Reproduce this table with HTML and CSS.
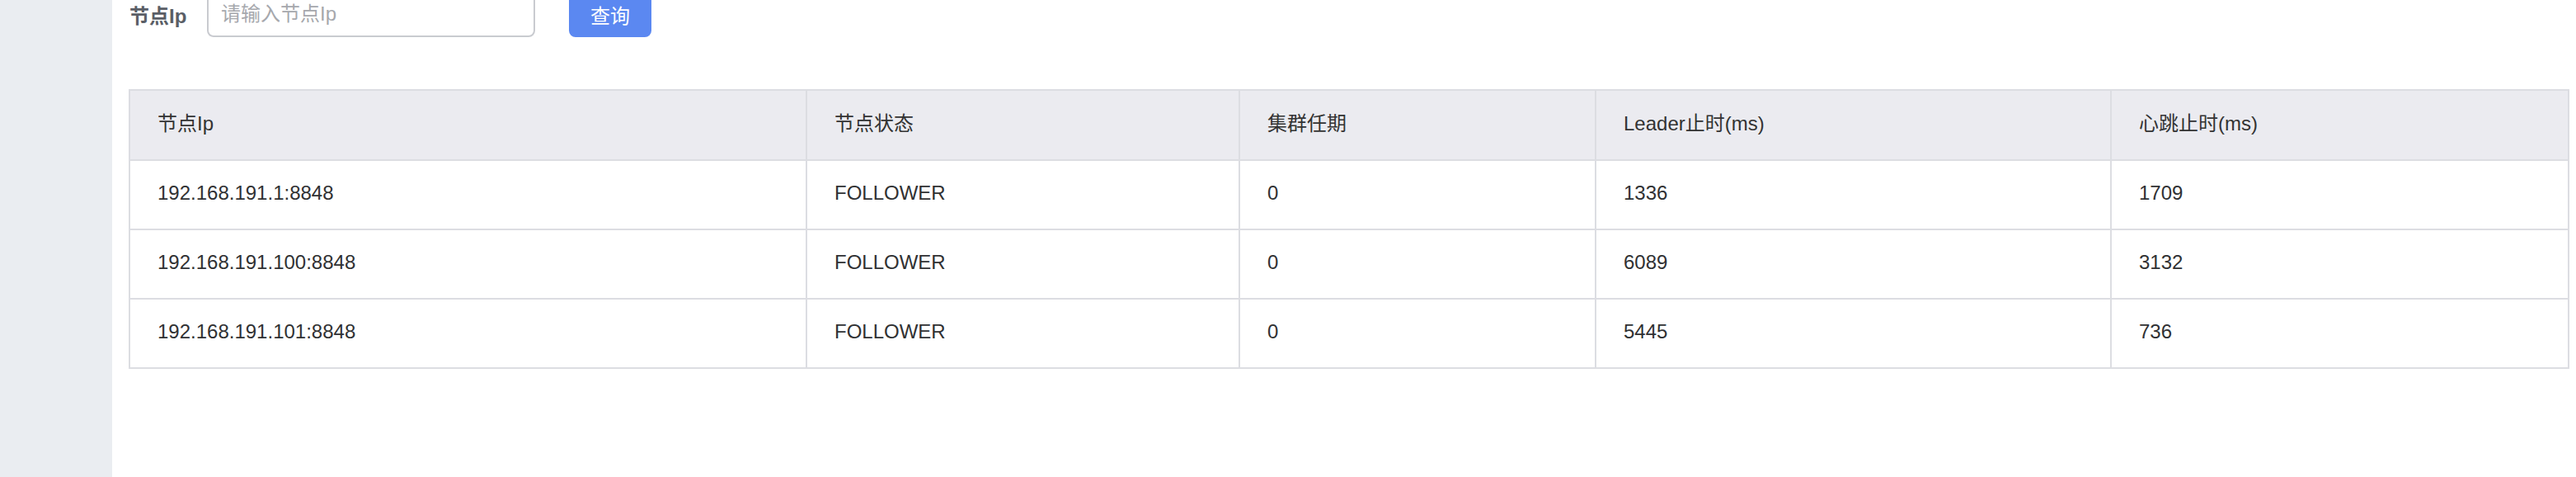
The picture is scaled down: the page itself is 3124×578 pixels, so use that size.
FILE: index.html
```html
<!DOCTYPE html>
<html lang="zh-CN">
<head>
<meta charset="utf-8">
<title>集群管理</title>
<link rel="stylesheet" href="styles.css">
</head>
<body>
<div class="layout">
  <aside class="sidebar"></aside>
  <main class="content">
    <form class="search">
      <label class="search-label" for="ip">节点Ip</label>
      <input id="ip" class="search-input" type="text" placeholder="请输入节点Ip">
      <button type="button" class="search-btn">查询</button>
    </form>
    <table class="grid">
      <colgroup>
        <col class="col-ip">
        <col class="col-state">
        <col class="col-term">
        <col class="col-leader">
        <col class="col-heart">
      </colgroup>
      <thead>
        <tr>
          <th>节点Ip</th>
          <th>节点状态</th>
          <th>集群任期</th>
          <th>Leader止时(ms)</th>
          <th>心跳止时(ms)</th>
        </tr>
      </thead>
      <tbody>
        <tr>
          <td>192.168.191.1:8848</td>
          <td>FOLLOWER</td>
          <td>0</td>
          <td>1336</td>
          <td>1709</td>
        </tr>
        <tr>
          <td>192.168.191.100:8848</td>
          <td>FOLLOWER</td>
          <td>0</td>
          <td>6089</td>
          <td>3132</td>
        </tr>
        <tr>
          <td>192.168.191.101:8848</td>
          <td>FOLLOWER</td>
          <td>0</td>
          <td>5445</td>
          <td>736</td>
        </tr>
      </tbody>
    </table>
  </main>
</div>
</body>
</html>
```

FILE: styles.css
```css
html, body {
  margin: 0;
  padding: 0;
  background: #ffffff;
  font-family: "Liberation Sans", "Noto Sans CJK SC", sans-serif;
  color: #303133;
}

.layout {
  display: flex;
  height: 100vh;
  overflow: hidden;
}

.sidebar {
  flex: 0 0 136px;
  background: #eaedf1;
}

.content {
  flex: 1;
  min-width: 0;
  padding: 0 10px 0 20px;
  margin-top: -11px;
}

.search {
  display: flex;
  align-items: center;
  height: 56px;
  margin: 0;
}

.search-label {
  flex: 0 0 95px;
  box-sizing: border-box;
  padding-left: 1px;
  font-size: 24px;
  font-weight: bold;
  color: #5a5e66;
}

.search-input {
  box-sizing: border-box;
  width: 398px;
  height: 56px;
  padding: 0 15px;
  border: 2px solid #c9cbd0;
  border-radius: 8px;
  font-family: inherit;
  font-size: 24px;
  color: #303133;
  outline: none;
}

.search-input::placeholder {
  color: #a6a8ad;
}

.search-btn {
  box-sizing: border-box;
  margin-left: 41px;
  width: 100px;
  height: 56px;
  border: none;
  border-radius: 8px;
  background: #5b88f1;
  color: #ffffff;
  font-family: inherit;
  font-size: 24px;
  cursor: pointer;
}

.grid {
  width: 100%;
  margin-top: 63px;
  table-layout: fixed;
  border-collapse: collapse;
  border: 2px solid #dcdde2;
  font-size: 24px;
}

.col-ip { width: 821px; }
.col-state { width: 525px; }
.col-term { width: 432px; }
.col-leader { width: 625px; }
.col-heart { width: 555px; }

.grid th,
.grid td {
  border: 2px solid #dcdde2;
  padding: 22px 33px 26px;
  line-height: 34px;
  text-align: left;
  white-space: nowrap;
}

.grid th {
  background: #ebebf0;
  font-weight: normal;
  color: #333333;
  padding-top: 23px;
  padding-bottom: 26px;
}

.grid td {
  color: #303133;
}
```
